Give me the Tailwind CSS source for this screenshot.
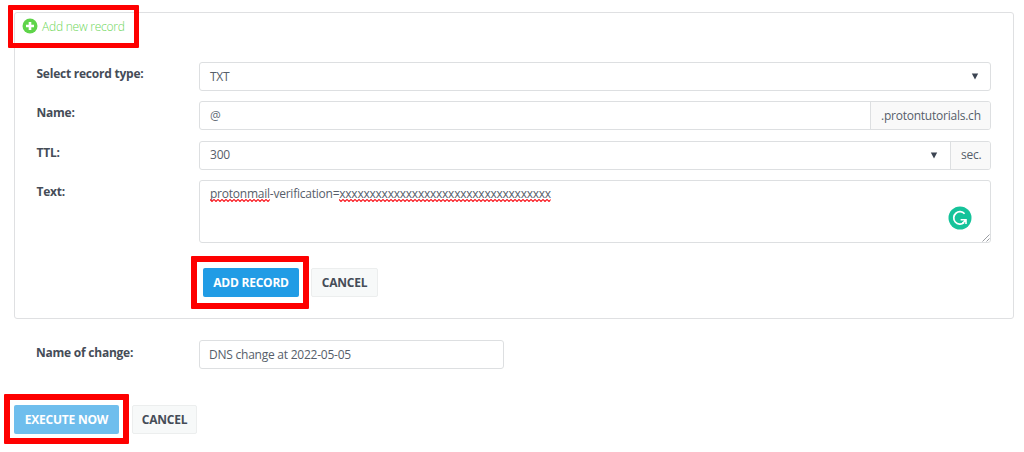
<!DOCTYPE html>
<html lang="en">

<head>
    <meta charset="utf-8">
    <title>DNS records</title>
    <script src="https://cdn.jsdelivr.net/npm/@tailwindcss/browser@4"></script>
    <meta name="viewport" content="width=device-width, initial-scale=1">
</head>

<body class="h-[452px] overflow-hidden bg-white font-['Open_Sans','Noto_Sans',sans-serif] text-[12px] tracking-[-0.235px] leading-4 text-[#565e6a]">
    <div class="flex flex-col pt-3">
        <!-- New record -->
        <div class="ml-[14px] w-[1000px] h-[307px] px-[21px] border border-[#dfe0e2] rounded-[3px]">
            <div class="relative -ml-[14px] pt-[5px] h-12 flex items-start text-[#6dd658] font-light">
                <svg class="w-4 h-4 mr-[4px]" viewBox="0 0 16 16">
                    <circle cx="8" cy="8" r="7.5" fill="#5fd44a" />
                    <path d="M8 4v8M4 8h8" stroke="#fff" stroke-width="2.6" />
                </svg>
                <span class="mt-px">Add new record</span>
                <div class="absolute -top-2 -left-[14px] w-[131px] h-[43px] border-[5px] border-[#fe0000] rounded-[1px]"></div>
            </div>
            <div class="grid grid-cols-[163px_792px] gap-y-[10.4px] mt-px">
                <label class="pt-1 pl-[0.5px] font-bold text-[#454c57]">Select record type:</label>
                <div class="h-[29px] flex items-center justify-between px-[10px] border border-[#dddfe1] rounded-[3px]">
                    <span>TXT</span>
                    <svg class="w-2 h-[7px] mr-[1px]" viewBox="0 0 8 7"><path d="M.8.5h6.4L4 6.5z" fill="#3c4452" /></svg>
                </div>
                <label class="pt-1 pl-[0.5px] font-bold text-[#454c57]">Name:</label>
                <div class="h-[29px] flex border border-[#dddfe1] rounded-[3px]">
                    <span class="flex-1 flex items-center px-[10px] text-[#666e79]">@</span>
                    <span class="w-[120px] flex items-center pl-[10px] border-l border-[#dddfe1] bg-[#f9f9f9] rounded-r-[2px]">.protontutorials.ch</span>
                </div>
                <label class="pt-1 pl-[0.5px] font-bold text-[#454c57]">TTL:</label>
                <div class="h-[29px] flex border border-[#dddfe1] rounded-[3px]">
                    <span class="flex-1 flex items-center justify-between px-[10px]">
                        300
                        <svg class="w-2 h-[7px] mr-[2px]" viewBox="0 0 8 7"><path d="M.8.5h6.4L4 6.5z" fill="#3c4452" /></svg>
                    </span>
                    <span class="w-[40px] flex items-center pl-[10px] border-l border-[#dddfe1] bg-[#f9f9f9] rounded-r-[2px]">sec.</span>
                </div>
                <label class="pt-1 pl-[0.5px] font-bold text-[#454c57]">Text:</label>
                <div class="relative h-[63px] px-[10px] pt-[5px] border border-[#dddfe1] rounded-[3px]">
                    <span class="relative">protonmail<svg class="absolute left-0 top-[14px] w-full h-[3px]"><defs><pattern id="squiggle" width="4" height="3" patternUnits="userSpaceOnUse"><path d="M-1 .5L0 .5 2 2.5 4 .5 5 .5" fill="none" stroke="#fa1a22" stroke-width="1.2" /></pattern></defs><rect width="100%" height="3" fill="url(#squiggle)" /></svg></span>-verification=<span class="relative">xxxxxxxxxxxxxxxxxxxxxxxxxxxxxxxxxxx<svg class="absolute left-0 top-[14px] w-full h-[3px]"><rect width="100%" height="3" fill="url(#squiggle)" /></svg></span>
                    <svg class="absolute right-[18px] bottom-[12px] w-6 h-6" viewBox="0 0 24 24">
                        <circle cx="12" cy="12" r="11.5" fill="#15c39a" />
                        <path d="M16.6 7.8A6.2 6.2 0 1 0 16 16.6" fill="none" stroke="#fff" stroke-width="1.7" />
                        <path d="M12.6 13.8h5.4v4.2M14.4 17.4l3.2-3.2" fill="none" stroke="#fff" stroke-width="1.6" />
                    </svg>
                    <svg class="absolute right-0 bottom-0 w-2 h-2" viewBox="0 0 8 8"><path d="M.5 7.5l7-7M4.5 7.5l3-3" stroke="#9a9da2" /></svg>
                </div>
            </div>
            <div class="flex mt-[25px] ml-[167px] gap-[12px] font-bold">
                <div class="relative">
                    <button class="block w-[96px] h-[29px] rounded-[2px] bg-[#219ce5] text-white">ADD RECORD</button>
                    <div class="absolute -top-[12px] -left-[12px] w-[118px] h-[53px] border-[6px] border-[#fe0000] rounded-[1px]"></div>
                </div>
                <button class="w-[67px] h-[29px] rounded-[2px] border border-[#eceeee] bg-[#f7f9f9] text-[#454c57]">CANCEL</button>
            </div>
        </div>
        <!-- Name of change -->
        <div class="flex mt-[21px] ml-9">
            <label class="w-[163px] pt-[5px] font-bold text-[#454c57]">Name of change:</label>
            <div class="w-[305px] h-[29px] flex items-center px-[9px] border border-[#dddfe1] rounded-[3px]">DNS change at 2022-05-05</div>
        </div>
        <div class="flex mt-9 ml-[14px] gap-[13px] font-bold">
            <div class="relative">
                <button class="block w-[105px] h-[29px] rounded-[2px] bg-[#6fbeed] text-white">EXECUTE NOW</button>
                <div class="absolute -top-[11px] -left-[10px] w-[125px] h-[50px] border-[6px] border-[#fe0000] rounded-[1px]"></div>
            </div>
            <button class="w-[65px] h-[29px] rounded-[2px] border border-[#eceeee] bg-[#f7f9f9] text-[#454c57]">CANCEL</button>
        </div>
    </div>
</body>

</html>
